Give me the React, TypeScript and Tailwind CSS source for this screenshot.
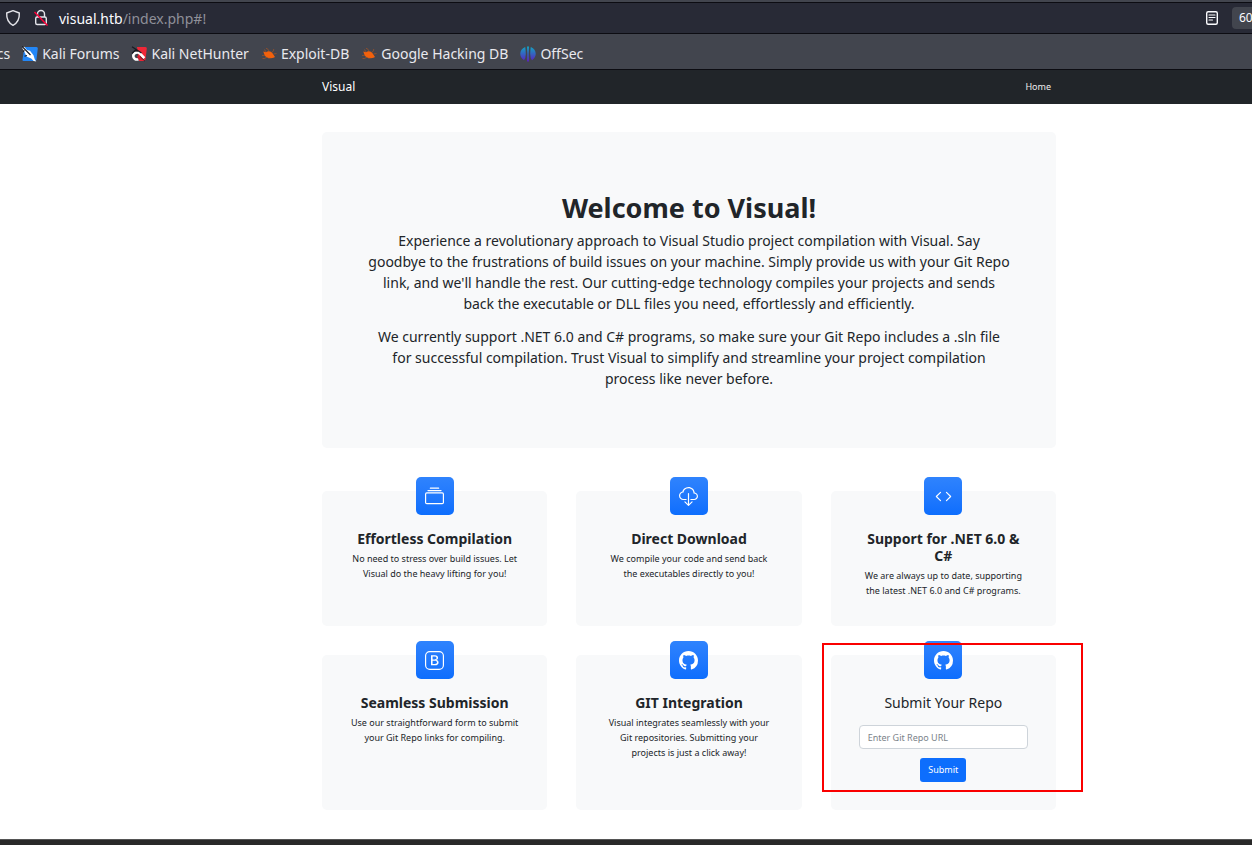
import type { ReactNode } from 'react';
import {
  BsBootstrap,
  BsCloudDownload,
  BsCode,
  BsCollection,
  BsGithub,
} from 'react-icons/bs';

function ShieldIcon() {
  return (
    <svg viewBox="0 0 16 18" className="h-[18px] w-4" fill="none" stroke="#e4e4ea" strokeWidth="1.4" strokeLinejoin="round" aria-hidden="true">
      <path d="M8 1.6 14.3 4c.3 5.4-1.3 9.7-6.3 12.3C3 13.700 1.400 9.400 1.700 4Z" />
    </svg>
  );
}

function InsecureLockIcon() {
  return (
    <svg viewBox="0 0 16 18" className="h-[18px] w-4" fill="none" aria-hidden="true">
      <rect x="2.700" y="8" width="10.600" height="7.500" rx="1.500" stroke="#e4e4ea" strokeWidth="1.400" />
      <path d="M4.500 8V5a3.500 3.500 0 0 1 7 0v3" stroke="#e4e4ea" strokeWidth="1.400" />
      <path d="M1.500 3 14.500 16.500" stroke="#ff0039" strokeWidth="1.500" />
    </svg>
  );
}

function ReaderIcon() {
  return (
    <svg viewBox="0 0 14 16" className="h-4 w-3.5" fill="none" stroke="#fbfbfe" aria-hidden="true">
      <rect x="1.700" y="1.700" width="10.600" height="12.600" rx="1.500" strokeWidth="1.400" />
      <path d="M4 5h6M4 7.500h6M4 10h3.500" strokeWidth="1.100" strokeLinecap="round" />
    </svg>
  );
}

function ForumsIcon() {
  return (
    <svg viewBox="0 0 16 16" className="size-4" aria-hidden="true">
      <path d="M2.500 1H14.500Q16 1 15.800 2.500L14.500 13.500Q14.300 15 13 15H1.500Q.3 15 .5 13.500Z" fill="#2387f7" />
      <path d="M0 1.500 2.300 .8 5 4l3 .8 3.500 4.500 1.300 4.200 1.500 2-2.600-.6-2.500-2.400L4.500 10.500 3 7Z" fill="#fff" />
      <path d="M0 .5 8.500 9M2.500 4.500 1 5.500M5 9.500l-2.500.8" stroke="#191b22" strokeWidth="1.200" fill="none" />
    </svg>
  );
}

function NetHunterIcon() {
  return (
    <svg viewBox="0 0 16 16" className="size-4" aria-hidden="true">
      <path d="M6 1H14.500Q16 1 15.800 2.500L14.500 13.500Q14.300 15 13 15H8Z" fill="#ee2737" />
      <path d="M7.500 13.300c-3 .8-5.200-.8-5.200-3.300 0-3.200 4.200-4.500 6.700-2.500l4.300 4.700" fill="none" stroke="#fff" strokeWidth="2.600" />
      <path d="M6 10.500c.8-1.300 2-1 3 .2l3.500 3.500-4.500-.2Z" fill="#d91f30" />
      <path d="M1 .8 10.500 7M1 7.500l3-3 3 .5" stroke="#191b22" strokeWidth="1.300" fill="none" />
      <path d="m9 10.500 5 4.700" stroke="#191b22" strokeWidth=".8" />
    </svg>
  );
}

function BugIcon() {
  return (
    <svg viewBox="0 0 16 16" className="size-4" aria-hidden="true">
      <path d="M2.300 5.500 5 6.200C7.500 4 11 5.500 12 8l2 3-1.500.8c-3 1-7.500.2-9-2.800Z" fill="#f2610c" />
      <path d="m5 6-1.500-2.500M8 5 6.500 2.800 5 2.400M11 6.500l1.500-2 .2-1.500M4 9.300 1 9.500M6 11l-2.500 1.500H1.500M9 11.500 7.500 13M12.500 8l3-.5" stroke="#b8561c" strokeWidth=".6" fill="none" />
    </svg>
  );
}

function OffSecIcon() {
  return (
    <svg viewBox="0 0 16 16" className="size-4" aria-hidden="true">
      <defs>
        <linearGradient id="offsec" x1="0" y1="0" x2="0" y2="1">
          <stop offset="0" stopColor="#12a5c2" />
          <stop offset="1" stopColor="#5a1fc0" />
        </linearGradient>
      </defs>
      <path
        d="M5.200 1C-.8 3.500-1.500 10.500 4 14.300Q5.800 12 5.800 8Q5.800 4 5.200 1ZM10.800 1c6 2.500 6.700 9.500 1.200 13.300Q10.200 12 10.200 8Q10.200 4 10.800 1ZM7 .6H9L8.700 8 9 15.500H7L7.300 8Z"
        fill="url(#offsec)"
      />
    </svg>
  );
}

const bookmarks = [
  { label: 'Kali Forums', icon: <ForumsIcon /> },
  { label: 'Kali NetHunter', icon: <NetHunterIcon /> },
  { label: 'Exploit-DB', icon: <BugIcon /> },
  { label: 'Google Hacking DB', icon: <BugIcon /> },
  { label: 'OffSec', icon: <OffSecIcon /> },
];

function Card({ icon, children }: { icon: ReactNode; children: ReactNode }) {
  return (
    <section className="relative flex flex-col items-center rounded-[5px] bg-[#f8f9fa] px-7 pb-7 text-center">
      <div className="-mt-3.5 mb-[15px] flex size-[38px] shrink-0 items-center justify-center rounded-[5px] bg-linear-to-b from-[#2f83fd] to-[#0d6efd] text-[19px] text-white">
        {icon}
      </div>
      {children}
    </section>
  );
}

const features = [
  {
    title: 'Effortless Compilation',
    text: 'No need to stress over build issues. Let Visual do the heavy lifting for you!',
    icon: <BsCollection />,
  },
  {
    title: 'Direct Download',
    text: 'We compile your code and send back the executables directly to you!',
    icon: <BsCloudDownload />,
  },
  {
    title: 'Support for .NET 6.0 & C#',
    text: 'We are always up to date, supporting the latest .NET 6.0 and C# programs.',
    icon: <BsCode />,
  },
  {
    title: 'Seamless Submission',
    text: 'Use our straightforward form to submit your Git Repo links for compiling.',
    icon: <BsBootstrap />,
  },
  {
    title: 'GIT Integration',
    text: 'Visual integrates seamlessly with your Git repositories. Submitting your projects is just a click away!',
    icon: <BsGithub />,
  },
];

export default function App() {
  return (
    <div className="overflow-hidden bg-white font-['Noto_Sans',sans-serif] text-[#212529]">
      <div className="border-b border-[#0c0c12] bg-[#42454e] pt-0.5 text-[#fbfbfe]">
        <div className="flex h-8 items-center border-y border-[#0c0c12] bg-[#282a36] pl-[5px]">
          <ShieldIcon />
          <span className="ml-3">
            <InsecureLockIcon />
          </span>
          <span className="ml-2.5 grow text-[14px] text-[#8f9099]">
            <span className="text-[#fbfbfe]">visual.htb</span>/index.php#!
          </span>
          <ReaderIcon />
          <span className="-mr-4 ml-[13px] flex h-[22px] w-9 items-center rounded bg-[#42454e] pl-[7px] text-[12px]">
            60%
          </span>
        </div>
        <nav className="flex h-[35px] items-center gap-3 pt-1 text-[14px] whitespace-nowrap text-[#e9e9ee]">
          <a href="#docs" className="-ml-[22px]">Docs</a>
          {bookmarks.map((b) => (
            <a key={b.label} href="#!" className="flex items-center gap-1">
              {b.icon}
              {b.label}
            </a>
          ))}
        </nav>
      </div>

      <nav className="bg-[#212529] pl-[322px]">
        <div className="flex h-[34px] max-w-[734px] items-center justify-between pr-[5px] text-white">
          <a href="#!" className="text-[12px]">Visual</a>
          <a href="#!" className="text-[9px] text-[#eeeeee]">Home</a>
        </div>
      </nav>

      <main className="pt-7 pb-[29px] pl-[322px]">
        <div className="max-w-[734px]">
          <header className="rounded-[5px] bg-[#f8f9fa] px-8 pt-[58px] pb-[59px] text-center">
            <h1 className="mb-1 text-[27px] leading-[36px] font-bold">Welcome to Visual!</h1>
            <div className="flex flex-col gap-3 text-[14px] leading-[21px]">
              <p>
                Experience a revolutionary approach to Visual Studio project compilation with Visual. Say
                <br />
                goodbye to the frustrations of build issues on your machine. Simply provide us with your Git Repo
                <br />
                link, and we'll handle the rest. Our cutting-edge technology compiles your projects and sends
                <br />
                back the executable or DLL files you need, effortlessly and efficiently.
              </p>
              <p>
                We currently support .NET 6.0 and C# programs, so make sure your Git Repo includes a .sln file
                <br />
                for successful compilation. Trust Visual to simplify and streamline your project compilation
                <br />
                process like never before.
              </p>
            </div>
          </header>

          <div className="mt-[43px] grid grid-cols-3 gap-[29px]">
            {features.map((f) => (
              <Card key={f.title} icon={f.icon}>
                <h2 className="mb-1 text-[14px] leading-[17px] font-bold">{f.title}</h2>
                <p className="text-[9px] leading-[15px]">{f.text}</p>
              </Card>
            ))}
            <Card icon={<BsGithub />}>
              <h2 className="mb-3.5 text-[14px] leading-[17px]">Submit Your Repo</h2>
              <form className="flex w-full flex-col items-center gap-[9px] text-[9px]">
                <input
                  type="text"
                  aria-label="Git Repo URL"
                  placeholder="Enter Git Repo URL"
                  className="h-6 w-full rounded border border-[#ced4da] bg-white px-2 placeholder:text-[#7b838a]"
                />
                <button type="button" className="h-6 rounded-[3px] bg-[#0d6efd] px-2 text-white">
                  Submit
                </button>
              </form>
              <div className="pointer-events-none absolute -top-3 -right-[27px] bottom-[18px] -left-[9px] border-2 border-[#fa0000]" />
            </Card>
          </div>
        </div>
      </main>
      <div className="h-1.5 border-t border-[#555555] bg-[#292929]" />
    </div>
  );
}
